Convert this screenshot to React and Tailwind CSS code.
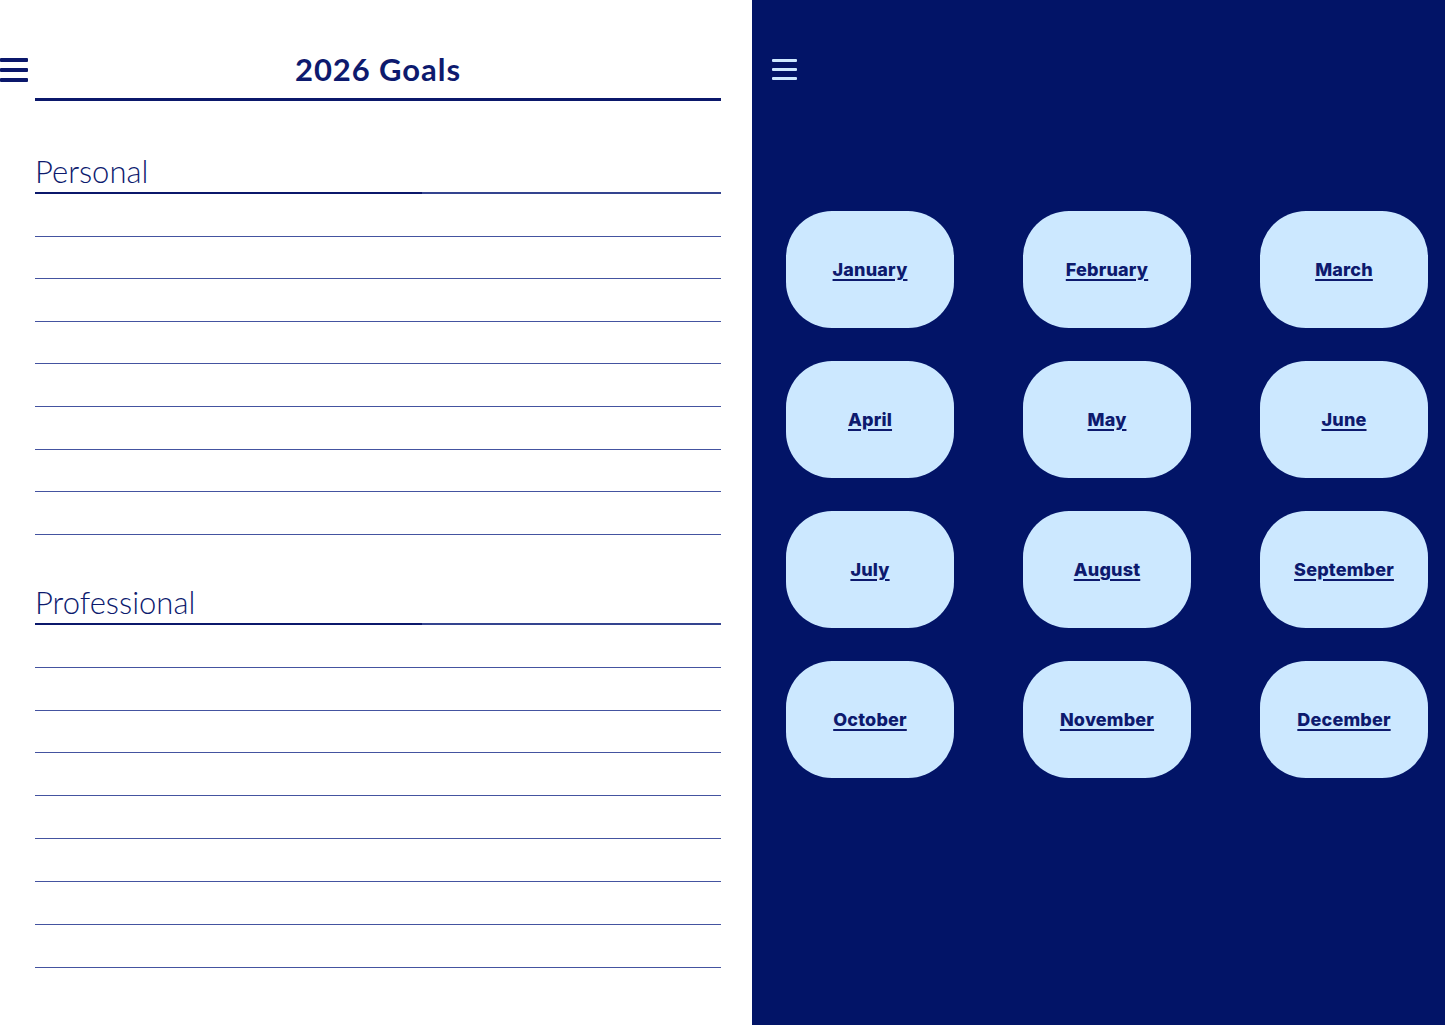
const MONTHS = [
  'January', 'February', 'March',
  'April', 'May', 'June',
  'July', 'August', 'September',
  'October', 'November', 'December',
]

function Hamburger({ color, width, bar, gap }) {
  return (
    <div className={`flex flex-col ${gap} ${width}`}>
      <span className={`block w-full ${bar} rounded-[1px] ${color}`} />
      <span className={`block w-full ${bar} rounded-[1px] ${color}`} />
      <span className={`block w-full ${bar} rounded-[1px] ${color}`} />
    </div>
  )
}

function Section({ title, top, row }) {
  return (
    <div className={top}>
      <h2 className="text-[31px] leading-none font-light text-[#0d1a6e]">{title}</h2>
      <div className="flex mt-[5px] h-[2px]">
        <div className="w-[387px] bg-[#0b186b]" />
        <div className="flex-1 bg-[#34448f]" />
      </div>
      {Array.from({ length: 8 }).map((_, i) => (
        <div key={i} className={`${row} border-b-[1.5px] border-[#4453a0]`} />
      ))}
    </div>
  )
}

export default function App() {
  return (
    <div className="flex w-[1445px] h-[1025px] overflow-hidden" style={{ fontFamily: 'Lato, "Noto Sans", sans-serif' }}>
      {/* goals sheet */}
      <div className="w-[752px] shrink-0 bg-white">
        <div className="flex items-start pt-[58px]">
          <Hamburger color="bg-[#0b186b]" width="w-[28px]" bar="h-[4px]" gap="gap-[6px]" />
          <div className="ml-[7px] w-[686px]">
            <h1 className="text-center text-[31px] leading-[24px] font-bold tracking-[0.03em] text-[#0d1a6e] -mt-[1px]">
              2026 Goals
            </h1>
            <div className="mt-[17px] h-[3px] bg-[#0b186b]" />
          </div>
        </div>

        <div className="pl-[35px] w-[721px]">
          <Section title="Personal" top="mt-[55px]" row="h-[42.6px]" />
          <Section title="Professional" top="mt-[52px]" row="h-[42.9px]" />
        </div>
      </div>

      {/* month picker */}
      <div className="flex-1 bg-[#021467]">
        <div className="pl-[20px] pt-[59px]">
          <Hamburger color="bg-[#cde8ff]" width="w-[25px]" bar="h-[3px]" gap="gap-[6px]" />
        </div>
        <div className="grid grid-cols-[168px_168px_168px] gap-x-[69px] gap-y-[33px] pl-[34px] mt-[131px]">
          {MONTHS.map((m) => (
            <button
              key={m}
              className="h-[117px] rounded-[46px] bg-[#cce8ff] flex items-center justify-center"
            >
              <span
                className="text-[18px] font-extrabold tracking-[0.01em] text-[#0d1a6e] underline decoration-2 underline-offset-[3px]"
                style={{ fontFamily: 'Inter, sans-serif' }}
              >
                {m}
              </span>
            </button>
          ))}
        </div>
      </div>
    </div>
  )
}
